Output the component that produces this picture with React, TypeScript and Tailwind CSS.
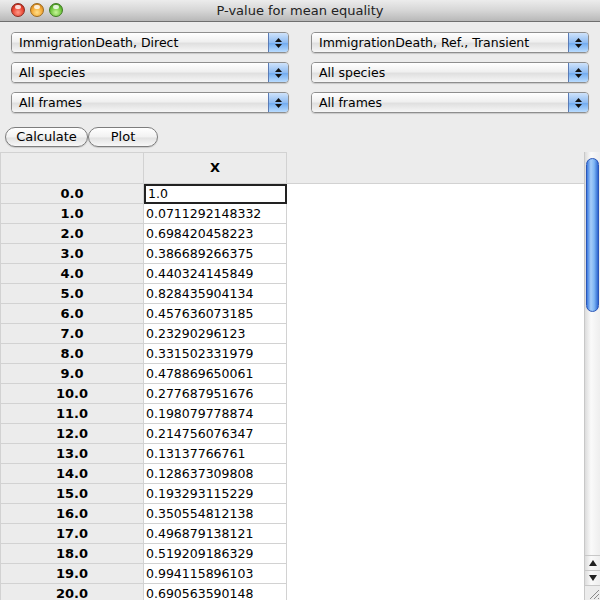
import React from "react"

const rows: [string, string][] = [
  ["0.0", "1.0"],
  ["1.0", "0.0711292148332"],
  ["2.0", "0.698420458223"],
  ["3.0", "0.386689266375"],
  ["4.0", "0.440324145849"],
  ["5.0", "0.828435904134"],
  ["6.0", "0.457636073185"],
  ["7.0", "0.23290296123"],
  ["8.0", "0.331502331979"],
  ["9.0", "0.478869650061"],
  ["10.0", "0.277687951676"],
  ["11.0", "0.198079778874"],
  ["12.0", "0.214756076347"],
  ["13.0", "0.13137766761"],
  ["14.0", "0.128637309808"],
  ["15.0", "0.193293115229"],
  ["16.0", "0.350554812138"],
  ["17.0", "0.496879138121"],
  ["18.0", "0.519209186329"],
  ["19.0", "0.994115896103"],
  ["20.0", "0.690563590148"],
]

function Light({ color }: { color: "red" | "yellow" | "green" }) {
  const cls =
    color === "red"
      ? "bg-[radial-gradient(circle_at_50%_70%,#ff9a8a_0%,#e8422f_55%,#a8190c_100%)] border-[#8a2a20]"
      : color === "yellow"
        ? "bg-[radial-gradient(circle_at_50%_70%,#ffe08a_0%,#f2a531_55%,#b56a0a_100%)] border-[#9a6a20]"
        : "bg-[radial-gradient(circle_at_50%_70%,#c8f59a_0%,#6cc43a_55%,#357d12_100%)] border-[#3f7a22]"
  return (
    <div className={`relative w-[14px] h-[14px] rounded-full border ${cls}`}>
      <div className="absolute left-[3px] top-[1px] w-[6px] h-[4px] rounded-full bg-white/80" />
    </div>
  )
}

function Combo({ label }: { label: string }) {
  return (
    <div className="flex h-[21px] rounded-[4px] border border-[#8e8e8e] shadow-[0_1px_1px_rgba(0,0,0,0.15)] overflow-hidden">
      <div className="flex-1 flex items-center pl-[7px] pt-[1px] bg-[linear-gradient(#ffffff,#f0f0f0_45%,#e0e0e0_55%,#f6f6f6)] text-[12.5px] text-black">
        {label}
      </div>
      <div className="w-[20px] flex flex-col items-center justify-center gap-[2px] border-l border-[#5a7bb5] bg-[linear-gradient(#cfe3fb,#8fbcf2_50%,#6ea9ef_52%,#b9dcff)]">
        <svg width="7" height="4" viewBox="0 0 7 4"><path d="M3.5 0L7 4H0z" fill="#111" /></svg>
        <svg width="7" height="4" viewBox="0 0 7 4"><path d="M0 0H7L3.5 4z" fill="#111" /></svg>
      </div>
    </div>
  )
}

function PushButton({ label, w }: { label: string; w: string }) {
  return (
    <div
      className={`${w} h-[20px] flex items-center justify-center rounded-full border border-[#7d7d7d] bg-[linear-gradient(#ffffff,#f2f2f2_50%,#e2e2e2_55%,#f8f8f8)] shadow-[0_1px_1px_rgba(0,0,0,0.15)] text-[13px] text-black`}
    >
      {label}
    </div>
  )
}

export default function App() {
  return (
    <div className="w-[600px] h-[600px] overflow-hidden flex flex-col bg-[#ececec] font-['DejaVu_Sans',sans-serif]">
      {/* Title bar */}
      <div className="relative h-[22px] shrink-0 flex items-center border-b border-[#6f6f6f] bg-[linear-gradient(#ececec,#d6d6d6_50%,#b8b8b8)]">
        <div className="absolute left-[11px] top-[3px] flex gap-[5px]">
          <Light color="red" />
          <Light color="yellow" />
          <Light color="green" />
        </div>
        <div className="w-full text-center text-[13px] text-[#222]">P-value for mean equality</div>
      </div>

      {/* Combo boxes */}
      <div className="grid grid-cols-2 gap-x-[22px] gap-y-[9px] px-[11px] pt-[10px]">
        <Combo label="ImmigrationDeath, Direct" />
        <Combo label="ImmigrationDeath, Ref., Transient" />
        <Combo label="All species" />
        <Combo label="All species" />
        <Combo label="All frames" />
        <Combo label="All frames" />
      </div>

      {/* Buttons */}
      <div className="flex pl-[5px] pt-[14px]">
        <PushButton label="Calculate" w="w-[83px]" />
        <PushButton label="Plot" w="w-[70px]" />
      </div>

      {/* Table */}
      <div className="flex flex-1 mt-[5px] min-h-0">
        <div className="flex-1 bg-white overflow-hidden">
          <div className="flex h-[32px] bg-[#ececec] border-b border-[#d2d2d2]">
            <div className="w-[144px] border-l border-r border-t border-[#d2d2d2]" />
            <div className="w-[143px] border-r border-t border-[#d2d2d2] flex items-center justify-center font-bold text-[13px]">
              X
            </div>
          </div>
          {rows.map(([k, v], i) => (
            <div key={k} className="flex h-[20px]">
              <div className="w-[144px] flex items-center justify-center bg-[#ececec] border-l border-r border-b border-[#d2d2d2] font-bold text-[13px]">
                {k}
              </div>
              <div
                className={`w-[143px] flex items-center pl-[2px] pt-[1px] text-[12.5px] text-black ${
                  i === 0 ? "border-2 border-[#222]" : "border-r border-b border-[#d2d2d2]"
                }`}
              >
                {v}
              </div>
            </div>
          ))}
        </div>

        {/* Scrollbar */}
        <div className="w-[16px] flex flex-col bg-[linear-gradient(90deg,#dcdcdc,#fafafa_40%,#eeeeee)] border-l border-[#c8c8c8]">
          <div className="flex-1 pt-[6px] px-[1px]">
            <div className="h-[154px] rounded-full border border-[#2a56b8] bg-[linear-gradient(90deg,#3c7ae0,#a5cdf8_35%,#7eb6f4_65%,#2e68d0)]" />
          </div>
          <div className="h-[15px] flex items-center justify-center border-t border-[#c8c8c8]">
            <svg width="8" height="6" viewBox="0 0 8 6"><path d="M4 0L8 6H0z" fill="#222" /></svg>
          </div>
          <div className="h-[15px] flex items-center justify-center border-t border-[#c8c8c8]">
            <svg width="8" height="6" viewBox="0 0 8 6"><path d="M0 0H8L4 6z" fill="#222" /></svg>
          </div>
          <div className="h-[15px] border-t border-[#c8c8c8] bg-[#ececec] flex items-end justify-end">
            <svg width="14" height="14" viewBox="0 0 14 14">
              <path d="M13 4L4 13M13 8L8 13M13 12L12 13" stroke="#8a8a8a" strokeWidth="1" />
            </svg>
          </div>
        </div>
      </div>
    </div>
  )
}
